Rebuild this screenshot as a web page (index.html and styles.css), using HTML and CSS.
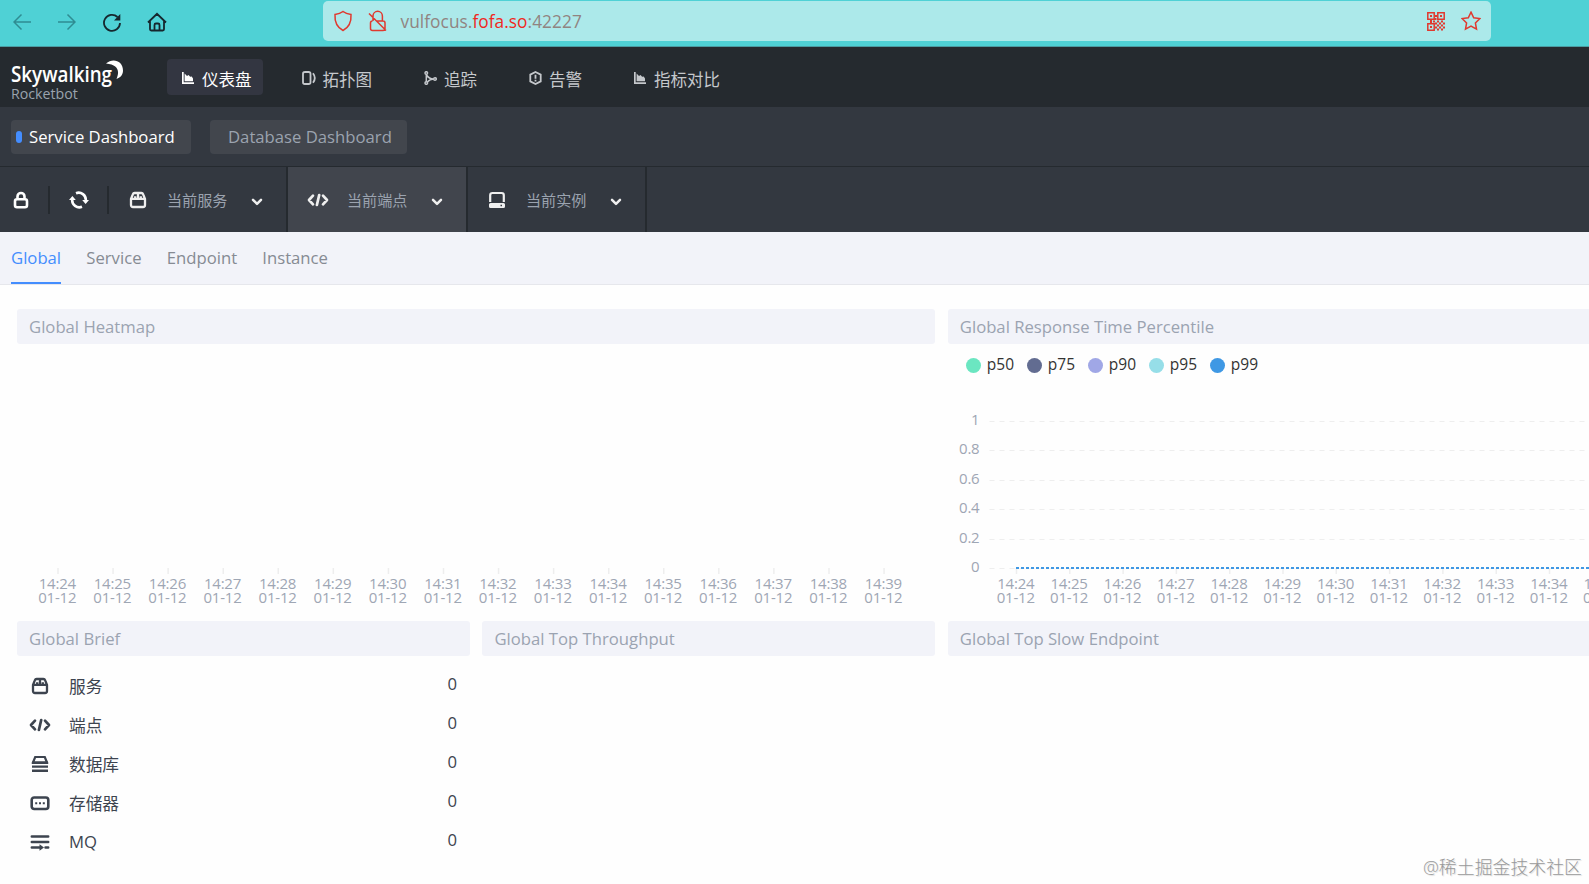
FILE: index.html
```html
<!DOCTYPE html>
<html lang="zh-CN">

<head>
  <meta charset="UTF-8">
  <title>SkyWalking Rocketbot</title>
  <meta name="viewport" content="width=device-width, initial-scale=1.0">
  <link rel="stylesheet" href="styles.css">
</head>

<body>

  <!-- 图标 -->
  <svg class="sprite">
    <symbol id="chart" viewBox="0 0 12 12">
      <path d="M0 0h1.7v10.2H12V12H0z" />
      <path d="M2.6 9.2V1.6L5 4l1.6-1 1.5 1.8 1.6-.4 1.3 2v2.8z" />
    </symbol>
    <symbol id="box" viewBox="0 0 18 18">
      <path d="M2 8l1.800-4.600Q4.300 2 5.600 2h6.800q1.300 0 1.800 1.400L16 8v6q0 2-2 2H4q-2 0-2-2zM2 7.800h14M9 2v5.500M6.200 5.200v2.300M11.800 5.200v2.300" fill="none" stroke="currentColor" stroke-width="2.300" />
    </symbol>
    <symbol id="code" viewBox="0 0 22 18">
      <path d="M6 4.700L2 9l4 4.300M16 4.700L20 9l-4 4.300M12.200 4L9.900 14" fill="none" stroke="currentColor" stroke-width="2.700" stroke-linecap="round" stroke-linejoin="round" />
    </symbol>
    <symbol id="down" viewBox="0 0 12 10">
      <path d="M2 2.800l4 4 4-4" fill="none" stroke="currentColor" stroke-width="2.500" stroke-linecap="round" stroke-linejoin="round" />
    </symbol>
  </svg>

  <div class="browser">
    <div class="browser-btns">
      <svg class="dim" width="18" height="18" viewBox="0 0 18 18"><path d="M18 9H1M8.500 1.500L1 9l7.500 7.500" /></svg>
      <svg class="dim" width="18" height="18" viewBox="0 0 18 18"><path d="M0 9h17M9.500 1.500L17 9l-7.500 7.500" /></svg>
      <svg class="thick" width="20" height="20" viewBox="0 0 20 20"><path d="M15.500 5A8 8 0 1 0 18 11" /><path class="solid" d="M18.300 2v6.500H12z" /></svg>
      <svg class="thick" width="20" height="20" viewBox="0 0 20 20"><path d="M1 10.500L10 1.800l9 8.700M3 9v8.300q0 1.200 1.200 1.200h11.600q1.200 0 1.200-1.200V9M7.500 18.500V13q0-1.500 1.500-1.500h2q1.500 0 1.500 1.500v5.500" /></svg>
    </div>
    <div class="address">
      <svg width="20" height="22" viewBox="0 0 20 22"><path d="M10 1.500c2.200 1.700 4.900 2.600 8 3 .4 6-1.500 12.500-8 16-6.500-3.500-8.400-10-8-16 3.100-.4 5.800-1.300 8-3z" /></svg>
      <svg width="20" height="22" viewBox="0 0 20 22"><path d="M5 11V6a4.700 4.700 0 0 1 9.400 0v4.500M8 11h7q2 0 2 2v5.500q0 2-2 2H4.500q-2 0-2-2V13q0-2 2-2M1 3.500l17 17" /></svg>
      <div class="url">vulfocus.<span>fofa.so</span>:42227</div>
      <svg class="qr" width="18" height="19" viewBox="0 0 18 19">
        <path d="M.8.800h6.400v6.400H.8zM10.800.800h6.400v6.400h-6.400zM.8 11.800h6.400v6.400H.8z" />
        <path class="solid" d="M3 3h2v2H3zM13 3h2v2h-2zM3 14h2v2H3zM8 3h2v2H8zM7.500 6h2v2h-2zM3 8h2v3H3zM6 8.500h2v2H6zM10 8.500h2v2h-2zM14 8.500h2v2h-2zM8 10.500h2v2H8zM12 10.500h2v2h-2zM16 10.500h2v2h-2zM10 12.500h2v2h-2zM14 12.500h2v2h-2zM8 14.500h2v2H8zM12 14.500h2v2h-2zM16 14.500h2v2h-2zM10 16.500h2v2h-2zM14 16.500h2v2h-2z" />
      </svg>
      <svg width="20" height="20" viewBox="0 0 20 20"><path d="M10 1.200l2.700 5.600 6.200.8-4.500 4.300 1.100 6.300-5.500-3-5.500 3 1.100-6.300L1.100 7.600l6.200-.8z" /></svg>
    </div>
  </div>

  <div class="header">
    <div class="logo">
      <svg width="116" height="30" viewBox="0 0 116 30">
        <text x="0" y="23" textLength="101" lengthAdjust="spacingAndGlyphs">Skywalking</text>
        <path d="M95 4.500C102-1.500 112 2 112 11.500c0 4-2.200 7-6.500 8.500C109 12 107 5.500 95 4.500z" />
      </svg>
      <div class="logo-sub">Rocketbot</div>
    </div>
    <div class="nav">
      <a class="nav-item active"><svg width="12" height="12"><use href="#chart" /></svg>仪表盘</a>
      <a class="nav-item"><svg class="line" width="14" height="14" viewBox="0 0 14 14"><path d="M2.500 1h4.200q1.800 0 1.800 1.800v8.400q0 1.800-1.800 1.800H2.800Q1 13 1 11.200V2.800Q1 1 2.800 1zM11 2.200q3.600 4.800 0 9.600" /></svg>拓扑图</a>
      <a class="nav-item"><svg class="line thin" width="13" height="14" viewBox="0 0 13 14"><circle cx="2.300" cy="2" r="1.300" /><circle cx="2.300" cy="12" r="1.300" /><circle cx="11" cy="8" r="1.300" /><path d="M2.300 3.300v7.400M2.500 4q2.500 4 7.200 4M9.700 8q-4 .2-6.300 3" /></svg>追踪</a>
      <a class="nav-item"><svg class="line" width="13" height="14" viewBox="0 0 13 14"><path d="M6.500 1l5.200 2.600v6.800L6.500 13l-5.200-2.600V3.600zM6.500 3.700v4M6.500 8.800v1.700" /></svg>告警</a>
      <a class="nav-item"><svg width="12" height="12"><use href="#chart" /></svg>指标对比</a>
    </div>
  </div>

  <div class="boards">
    <div class="board active">Service Dashboard</div>
    <div class="board">Database Dashboard</div>
  </div>

  <div class="tools">
    <div class="tool-btn lock"><svg width="16" height="18" viewBox="0 0 16 18"><path d="M4.500 8V5.500a3.500 3.500 0 0 1 7 0V8M4 8.200h8q2 0 2 2v4q0 2-2 2H4q-2 0-2-2v-4q0-2 2-2z" /></svg></div>
    <div class="tool-btn reload"><svg width="20" height="18" viewBox="0 0 20 18"><path d="M7 2.200a7.200 7.200 0 0 1 9.800 7.300M13 15.800A7.200 7.200 0 0 1 3.200 8.500" /><path class="solid" d="M13.200 9H20l-3.400 4zM0 9h6.800L3.400 5z" /></svg></div>
    <div class="select"><svg width="18" height="18"><use href="#box" /></svg><span>当前服务</span><svg class="arrow" width="12" height="10"><use href="#down" /></svg></div>
    <div class="select hover"><svg width="22" height="18"><use href="#code" /></svg><span>当前端点</span><svg class="arrow" width="12" height="10"><use href="#down" /></svg></div>
    <div class="select"><svg width="18" height="18" viewBox="0 0 18 18"><path d="M2.200 11V4.200q0-2.200 2.200-2.200h9.200q2.200 0 2.200 2.200V11" fill="none" stroke="currentColor" stroke-width="2.200" /><path fill-rule="evenodd" d="M2.500 12h13q1.500 0 1.500 1.500v2q0 1.500-1.500 1.500h-13Q1 17 1 15.500v-2Q1 12 2.500 12zM12.500 13.800v1.500H14v-1.500z" /></svg><span>当前实例</span><svg class="arrow" width="12" height="10"><use href="#down" /></svg></div>
  </div>

  <div class="tabs">
    <a class="tab active">Global</a>
    <a class="tab">Service</a>
    <a class="tab">Endpoint</a>
    <a class="tab">Instance</a>
  </div>

  <div class="dashboard">
    <div class="panel wide">
      <div class="title">Global Heatmap</div>
      <svg class="chart" id="heatmap" width="918" height="265"></svg>
    </div>
    <div class="panel wide">
      <div class="title">Global Response Time Percentile</div>
      <div class="legend">
        <span class="p50">p50</span>
        <span class="p75">p75</span>
        <span class="p90">p90</span>
        <span class="p95">p95</span>
        <span class="p99">p99</span>
      </div>
      <svg class="chart" id="percentile" width="641" height="225"></svg>
    </div>
    <div class="panel">
      <div class="title">Global Brief</div>
      <div class="brief">
        <div class="brief-row"><svg width="22" height="18"><use href="#box" /></svg><span>服务</span><b>0</b></div>
        <div class="brief-row"><svg width="22" height="18"><use href="#code" /></svg><span>端点</span><b>0</b></div>
        <div class="brief-row"><svg width="22" height="18" viewBox="0 0 22 18"><path d="M4 7.500L6.200 2h9.600L18 7.500z" fill="none" stroke="currentColor" stroke-width="2.200" /><path d="M3 6.500h16v2.400H3zM3 10.500h16v2.300H3zM3 14.500h16v2.400H3z" /></svg><span>数据库</span><b>0</b></div>
        <div class="brief-row"><svg width="22" height="18" viewBox="0 0 22 18"><rect x="2.700" y="3.500" width="16.600" height="11.500" rx="2.500" fill="none" stroke="currentColor" stroke-width="2.600" /><path d="M6.200 8.300h2v2h-2zM10 8.300h2v2h-2zM13.800 8.300h2v2h-2z" /></svg><span>存储器</span><b>0</b></div>
        <div class="brief-row"><svg width="22" height="18" viewBox="0 0 22 18"><path d="M2.800 3.500h16.400M2.800 9h16.400M2.800 14.500h8M16.500 14.500h2.700" fill="none" stroke="currentColor" stroke-width="2.500" stroke-linecap="round" /><path d="M10.500 11.300l4.500 3.200-4.500 3.200z" /></svg><span>MQ</span><b>0</b></div>
      </div>
    </div>
    <div class="panel">
      <div class="title">Global Top Throughput</div>
    </div>
    <div class="panel wide">
      <div class="title">Global Top Slow Endpoint</div>
    </div>
  </div>

  <div class="watermark">@稀土掘金技术社区</div>

  <script>
    const NS = 'http://www.w3.org/2000/svg';

    function add(svg, tag, attrs, text) {
      const el = document.createElementNS(NS, tag);
      for (const key in attrs) el.setAttribute(key, attrs[key]);
      if (text) el.textContent = text;
      svg.appendChild(el);
    }

    // 时间轴：刻度 + 两行文字
    function drawTimeAxis(svg, start, step, y, count) {
      for (let i = 0; i < count; i++) {
        const x = start + i * step;
        add(svg, 'line', { class: 'tick', x1: x, x2: x, y1: y, y2: y + 6 });
        add(svg, 'text', { class: 'label', x: x - 0.7, y: y + 20.5 }, `14:${24 + i}`);
        add(svg, 'text', { class: 'label', x: x - 0.7, y: y + 34.5 }, '01-12');
      }
    }

    const heatmap = document.getElementById('heatmap');
    drawTimeAxis(heatmap, 41, 55.07, 224, 16);

    const percentile = document.getElementById('percentile');
    ['1', '0.8', '0.6', '0.4', '0.2', '0'].forEach((value, i) => {
      const y = Math.round(37 + i * 29.4) + 0.5;
      add(percentile, 'line', { class: 'grid', x1: 41.5, x2: 641, y1: y, y2: y });
      add(percentile, 'text', { class: 'value', x: 31.5, y: y + 3.5 }, value);
    });
    drawTimeAxis(percentile, 68.5, 53.3, 184, 12);
    add(percentile, 'line', { class: 'series', x1: 68, x2: 641, y1: 184, y2: 184 });
  </script>
</body>

</html>
```

FILE: styles.css
```css
body {
  margin: 0;
  width: 1589px;
  height: 884px;
  overflow: hidden;
  position: relative;
  background: #fefefe;
  color: #3d444f;
  font-family: "Open Sans", "Noto Sans CJK SC", sans-serif;
  font-size: 16.7px;
}

svg {
  flex: none;
  fill: currentColor;
}

.sprite {
  display: none;
}

/* 浏览器栏 */
.browser {
  box-sizing: border-box;
  display: flex;
  height: 47px;
  padding-top: 1px;
  background: #4fd1d5;
  border-bottom: 1px solid #4a9ca2;
}

.browser svg {
  fill: none;
  stroke: currentColor;
  stroke-width: 1.5;
}

.browser svg .solid {
  fill: currentColor;
  stroke: none;
}

.browser-btns {
  box-sizing: border-box;
  display: flex;
  align-items: center;
  width: 323px;
  height: 42px;
  padding-left: 13px;
  color: #16272e;
}

.browser-btns svg {
  margin-right: 27px;
}

.browser-btns .dim {
  color: #2f8c92;
}

.browser-btns .dim + .thick {
  margin-left: -1px;
}

.browser-btns .thick {
  stroke-width: 1.8;
  margin-right: 24.5px;
}

.address {
  box-sizing: border-box;
  display: flex;
  align-items: center;
  width: 1168px;
  height: 40px;
  padding: 0 10px;
  border-radius: 5px;
  background: #ace9ea;
  color: #e0392f;
}

.address > svg {
  margin-right: 15px;
}

.address > svg:last-child {
  margin-right: 0;
}

.address .qr {
  margin-right: 16px;
  stroke-width: 1.5;
}

.url {
  flex: 1;
  margin-left: -2.5px;
  font-size: 17.3px;
  letter-spacing: .05px;
  color: #918481;
}

.url span {
  color: #f0281e;
}

/* 顶部导航 */
.header {
  display: flex;
  height: 60px;
  background: #252a2f;
}

.logo {
  width: 156px;
  padding: 12px 0 0 11px;
  color: #fff;
}

.logo svg {
  display: block;
}

.logo text {
  font-size: 21px;
  font-weight: 600;
}

.logo-sub {
  margin-top: -4px;
  font-size: 14.2px;
  line-height: 18px;
  color: #9aa3ad;
}

.nav {
  display: flex;
  gap: 24px;
  padding-top: 12px;
}

.nav-item {
  box-sizing: border-box;
  display: flex;
  align-items: center;
  height: 36px;
  padding: 3px 13px 0 15px;
  border-radius: 4px;
  font-size: 16.5px;
  color: #c5c8cc;
}

.nav-item svg {
  margin: -2px 8px 0 0;
}

.nav-item .line {
  margin-right: 7px;
  fill: none;
  stroke: currentColor;
  stroke-width: 1.8;
}

.nav-item .thin {
  stroke-width: 1.5;
}

.nav-item.active {
  padding-right: 11px;
  background: #333641;
  color: #fff;
}

/* 仪表盘列表 */
.boards {
  box-sizing: border-box;
  display: flex;
  gap: 19px;
  height: 60px;
  padding: 13px 11px 0;
  background: #333840;
  border-bottom: 1px solid #252a2f;
}

.board {
  position: relative;
  box-sizing: border-box;
  width: 197px;
  height: 34px;
  padding-left: 18px;
  border-radius: 4px;
  background: #42464d;
  color: #9ba3af;
  line-height: 34px;
  white-space: nowrap;
}

.board.active {
  width: 180px;
  color: #fff;
}

.board.active::before {
  content: "";
  position: absolute;
  left: 5px;
  top: 11px;
  width: 6px;
  height: 12px;
  border-radius: 3px;
  background: #448dfe;
}

/* 工具栏 */
.tools {
  display: flex;
  align-items: center;
  height: 65px;
  background: #333840;
  color: #efefef;
}

.tool-btn {
  box-sizing: border-box;
  height: 28px;
  border-right: 2px solid #252a2f;
  color: #fff;
}

.tool-btn svg {
  display: block;
  margin-top: 5px;
  fill: none;
  stroke: currentColor;
  stroke-width: 2.6;
}

.tool-btn svg .solid {
  fill: currentColor;
  stroke: none;
}

.lock {
  width: 50px;
  padding-left: 12.5px;
}

.reload {
  width: 59px;
  padding-left: 18.5px;
}

.select {
  box-sizing: border-box;
  display: flex;
  align-items: center;
  width: 179px;
  height: 65px;
  padding-left: 19.5px;
  border-right: 2px solid #252a2f;
}

.select.hover {
  width: 180px;
  padding-left: 18.5px;
  background: #41454d;
}

.select span {
  margin: -2px 23.5px 0 20.5px;
  font-size: 15.1px;
  color: #9ba3af;
}

.select.hover span {
  margin-left: 18.5px;
}

.select .arrow {
  margin-top: 4px;
}

/* 标签页 */
.tabs {
  box-sizing: border-box;
  display: flex;
  gap: 25.2px;
  height: 53px;
  padding-left: 11px;
  background: #f2f3f9;
  border-bottom: 1px solid #e6e7ec;
}

.tab {
  box-sizing: border-box;
  height: 52px;
  line-height: 52px;
  color: #868b93;
}

.tab.active {
  color: #448dfe;
  border-bottom: 2px solid #448dfe;
}

/* 面板 */
.dashboard {
  display: grid;
  grid-template-columns: 453px 453px 641px;
  grid-template-rows: 300px 240px;
  gap: 12px 12.4px;
  padding: 24px 0 0 17px;
}

.panel.wide:first-child {
  grid-column: span 2;
}

.title {
  height: 35px;
  padding-left: 12px;
  border-radius: 3px;
  background: #f2f3f9;
  color: #9ba3b1;
  line-height: 36px;
}

/* 右侧面板延伸到窗口边缘 */
.panel:nth-child(2) .title,
.panel:last-child .title {
  border-radius: 3px 0 0 3px;
}

.chart {
  display: block;
}

.tick {
  stroke: #eee;
  stroke-width: 1.5;
}

.label,
.value {
  fill: #9ea6b4;
  font-size: 15px;
  letter-spacing: -.2px;
  text-anchor: middle;
}

.value {
  text-anchor: end;
}

.grid {
  stroke: #eee;
  stroke-dasharray: 5 5;
}

.series {
  stroke: #3f98e4;
  stroke-width: 2;
  stroke-dasharray: 3 2;
}

.legend {
  display: flex;
  gap: 12px;
  height: 40px;
  padding-left: 18px;
  line-height: 41px;
  font-size: 15.5px;
  color: #333;
}

.legend span {
  display: flex;
  align-items: center;
  width: 49px;
}

.legend span::before {
  content: "";
  width: 15px;
  height: 15px;
  margin: 3px 6px 0 0;
  border-radius: 50%;
  background: #6be6c1;
}

.legend .p75::before {
  background: #626c91;
}

.legend .p90::before {
  background: #a0a7e6;
}

.legend .p95::before {
  background: #96dee8;
}

.legend .p99::before {
  background: #3f98e4;
}

.brief {
  padding: 10px 13px 0 12px;
}

.brief-row {
  display: flex;
  align-items: center;
  height: 39px;
}

.brief-row span {
  flex: 1;
  margin-left: 18px;
}

.brief-row b {
  font-weight: normal;
  margin-top: -5px;
}

/* 水印 */
.watermark {
  position: absolute;
  right: 7px;
  bottom: 4px;
  font-size: 17.9px;
  line-height: 26px;
  font-weight: 300;
  color: #999;
  text-shadow: 1px 1px 1px #ddd;
}
```
